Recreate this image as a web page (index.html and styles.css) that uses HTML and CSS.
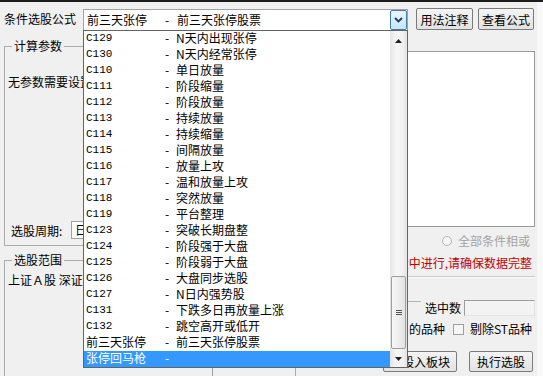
FILE: index.html
```html
<!DOCTYPE html>
<html lang="zh-CN">
<head>
<meta charset="utf-8">
<title>条件选股</title>
<link rel="stylesheet" href="styles.css">
</head>
<body>
<div class="topbar"></div>
<div class="window">
  <header class="header">
    <span class="hlabel">条件选股公式</span>
    <div class="combo">
      <span class="c-code">前三天张停</span><span class="c-dash">-</span><span class="c-name">前三天张停股票</span>
      <span class="combo-btn"><svg width="9" height="6" viewBox="0 0 9 6"><polyline points="1,1 4.5,4.5 8,1" fill="none" stroke="#1d3a63" stroke-width="1.8"/></svg></span>
    </div>
    <button class="btn btn-note">用法注释</button>
    <button class="btn btn-view">查看公式</button>
  </header>

  <div class="main">
    <div class="left">
      <fieldset class="group group-params">
        <legend>计算参数</legend>
        <p class="noparam clip">无参数需要设置</p>
        <div class="period-row clip"><span class="period-label">选股周期:</span><span class="period-select">日线</span></div>
      </fieldset>
      <fieldset class="group group-range">
        <legend>选股范围</legend>
        <p class="range clip">上证Ａ股 深证Ａ股</p>
        <div class="tail"></div>
      </fieldset>
    </div>

    <div class="right">
      <div class="cond-box"></div>
      <div class="radio-row"><span class="radio"></span><span class="radio-text">全部条件相或</span></div>
      <div class="warn">选股在盘中进行,请确保数据完整</div>
      <div class="sep"></div>
      <div class="count-row"><span class="count-line"></span><span class="count-label">选中数</span><span class="count-input"></span></div>
      <div class="check-row"><span>剔除当前未交易的品种</span><span class="check"></span><span>剔除ST品种</span></div>
      <div class="btn-row"><button class="btn btn-block">选股入板块</button><button class="btn btn-run">执行选股</button></div>
    </div>
  </div>

  <div class="droplist">
    <ul class="items">
      <li class="row"><span class="code lat">C129</span><span class="dash">-</span><span class="name">N天内出现张停</span></li>
      <li class="row"><span class="code lat">C130</span><span class="dash">-</span><span class="name">N天内经常张停</span></li>
      <li class="row"><span class="code lat">C110</span><span class="dash">-</span><span class="name">单日放量</span></li>
      <li class="row"><span class="code lat">C111</span><span class="dash">-</span><span class="name">阶段缩量</span></li>
      <li class="row"><span class="code lat">C112</span><span class="dash">-</span><span class="name">阶段放量</span></li>
      <li class="row"><span class="code lat">C113</span><span class="dash">-</span><span class="name">持续放量</span></li>
      <li class="row"><span class="code lat">C114</span><span class="dash">-</span><span class="name">持续缩量</span></li>
      <li class="row"><span class="code lat">C115</span><span class="dash">-</span><span class="name">间隔放量</span></li>
      <li class="row"><span class="code lat">C116</span><span class="dash">-</span><span class="name">放量上攻</span></li>
      <li class="row"><span class="code lat">C117</span><span class="dash">-</span><span class="name">温和放量上攻</span></li>
      <li class="row"><span class="code lat">C118</span><span class="dash">-</span><span class="name">突然放量</span></li>
      <li class="row"><span class="code lat">C119</span><span class="dash">-</span><span class="name">平台整理</span></li>
      <li class="row"><span class="code lat">C123</span><span class="dash">-</span><span class="name">突破长期盘整</span></li>
      <li class="row"><span class="code lat">C124</span><span class="dash">-</span><span class="name">阶段强于大盘</span></li>
      <li class="row"><span class="code lat">C125</span><span class="dash">-</span><span class="name">阶段弱于大盘</span></li>
      <li class="row"><span class="code lat">C126</span><span class="dash">-</span><span class="name">大盘同步选股</span></li>
      <li class="row"><span class="code lat">C127</span><span class="dash">-</span><span class="name">N日内强势股</span></li>
      <li class="row"><span class="code lat">C131</span><span class="dash">-</span><span class="name">下跌多日再放量上涨</span></li>
      <li class="row"><span class="code lat">C132</span><span class="dash">-</span><span class="name">跳空高开或低开</span></li>
      <li class="row"><span class="code">前三天张停</span><span class="dash">-</span><span class="name">前三天张停股票</span></li>
      <li class="row selected"><span class="code">张停回马枪</span><span class="dash">-</span><span class="name"></span></li>
    </ul>
    <div class="scrollbar">
      <div class="sb-btn sb-up"><svg width="7" height="4" viewBox="0 0 7 4"><polygon points="0,4 3.5,0 7,4" fill="#222"/></svg></div>
      <div class="sb-track">
        <div class="sb-thumb"><svg width="6" height="5" viewBox="0 0 6 5"><path d="M0 0.5H6M0 2.5H6M0 4.5H6" stroke="#555" stroke-width="1"/></svg></div>
      </div>
      <div class="sb-btn"><svg width="7" height="4" viewBox="0 0 7 4"><polygon points="0,0 3.5,4 7,0" fill="#222"/></svg></div>
    </div>
  </div>
</div>
</body>
</html>
```

FILE: styles.css
```css
* { box-sizing: border-box; }
html, body { margin: 0; padding: 0; }
body {
  width: 543px;
  height: 376px;
  overflow: hidden;
  position: relative;
  background: #f8f8f8;
  font-family: "Noto Sans CJK SC", "Liberation Sans", sans-serif;
  font-size: 12px;
  color: #000;
}
.topbar { height: 2px; background: #1c1c1c; }
.window {
  width: 537px;
  height: 374px;
  padding-top: 6px;
  background: #f0f0f0;
}

/* header */
.header { display: flex; align-items: flex-start; height: 23px; }
.hlabel { width: 83px; padding-left: 4px; line-height: 21px; white-space: nowrap; }
.combo {
  width: 325px;
  height: 22px;
  margin-top: 1px;
  border: 1px solid #a3a3a3;
  background: #fff;
  display: flex;
  align-items: center;
  padding-left: 3px;
  line-height: 14px;
}
.c-code { width: 78px; }
.c-dash { width: 12px; }
.c-name { white-space: nowrap; }
.combo-btn {
  margin-left: auto;
  width: 17px;
  height: 20px;
  border: 1px solid #3c7fb1;
  border-radius: 2px;
  background: linear-gradient(#eaf6fd, #c7e4fa);
  display: flex;
  align-items: center;
  justify-content: center;
}
.btn {
  height: 22px;
  padding: 0;
  font: inherit;
  color: #000;
  border: 1px solid #7a7a7a;
  border-radius: 2px;
  background: linear-gradient(#f4f4f4, #e2e2e2);
  white-space: nowrap;
}
.btn-note { width: 57px; margin-left: 8px; }
.btn-view { width: 56px; margin-left: 5px; }

/* main area */
.main {
  display: grid;
  grid-template-columns: 292px 233px;
  column-gap: 6px;
  padding-left: 4px;
}
.left { display: flex; flex-direction: column; }
.group {
  margin: 0;
  padding: 0 0 0 3px;
  border: 1px solid #ababab;
  min-width: 0;
}
.group legend { padding: 0 2px; margin-left: 4px; line-height: 14px; }
.group-params { margin-top: 8px; height: 207px; }
/* contents that run under the open drop-down list are cut at its left edge */
.clip { width: 75px; overflow: hidden; }
.noparam { margin: 22px 0 0; line-height: 14px; white-space: nowrap; }
.period-row { display: flex; align-items: center; margin-top: 132px; height: 18px; }
.period-label { width: 60px; margin-left: 3px; flex: none; }
.period-select {
  width: 60px;
  height: 18px;
  flex: none;
  border: 1px solid #a0a0a0;
  background: #fff;
  padding-left: 3px;
  line-height: 16px;
}
.group-range { margin-top: 7px; height: 140px; }
.range { margin: 6px 0 0; line-height: 14px; white-space: nowrap; }
.tail {
  margin-top: 80px;
  margin-left: 204px;
  height: 12px;
  border-left: 1px solid #a0a0a0;
}

/* right panel */
.right { display: flex; flex-direction: column; }
.cond-box { margin-top: 20px; height: 176px; border: 1px solid #9a9a9a; background: #fff; }
.radio-row {
  margin-top: 7px;
  height: 14px;
  display: flex;
  justify-content: flex-end;
  align-items: center;
  gap: 6px;
  padding-right: 5px;
}
.radio { width: 10px; height: 10px; border-radius: 50%; border: 1px solid #b5b5b5; background: #f5f5f5; }
.radio-text { color: #a3a3a3; line-height: 14px; }
.warn {
  margin-top: 8px;
  margin-left: 106px;
  height: 14px;
  line-height: 14px;
  text-align: right;
  padding-right: 3px;
  color: #c00000;
  white-space: nowrap;
  direction: rtl;
  overflow: hidden;
}
.sep { margin-top: 6px; height: 2px; border-top: 1px solid #c9c9c9; border-bottom: 1px solid #fbfbfb; }
.count-row { margin-top: 22px; height: 16px; display: flex; align-items: flex-start; }
.count-line { flex: 1; margin-top: 1px; border-top: 1px solid #b5b5b5; }
.count-label { margin: 0 3px 0 4px; line-height: 16px; }
.count-input {
  width: 71px;
  height: 16px;
  border-top: 1px solid #9c9c9c;
  border-left: 1px solid #9c9c9c;
  border-right: 1px solid #e3e3e3;
  border-bottom: 1px solid #e3e3e3;
  background: #f3f3f3;
}
.check-row {
  margin-top: 6px;
  margin-left: 106px;
  height: 14px;
  display: flex;
  justify-content: flex-end;
  align-items: center;
  padding-right: 3px;
  line-height: 14px;
  white-space: nowrap;
  overflow: hidden;
}
.check-row span { flex: none; }
.check { width: 11px; height: 11px; margin: 0 6px 0 8px; border: 1px solid #a0a0a0; background: #f6f6f6; }
.btn-row { margin-top: 15px; display: flex; justify-content: flex-end; gap: 12px; padding-right: 2px; }
.btn-row .btn { height: 21px; }
.btn-block { width: 74px; }
.btn-run { width: 64px; }

/* dropdown list overlay */
.droplist {
  position: absolute;
  left: 83px;
  top: 30px;
  width: 325px;
  height: 338px;
  border: 1px solid #646464;
  background: #fff;
  display: flex;
}
.items { list-style: none; margin: 0; padding: 0; width: 306px; }
.row {
  display: flex;
  height: 16px;
  line-height: 14px;
  padding-left: 2px;
  white-space: nowrap;
}
.code { width: 79px; }
.code.lat { font-family: "Liberation Mono", monospace; font-size: 11px; }
.dash { width: 11px; }
.selected { background: #3399ff; color: #fff; }
.scrollbar {
  width: 17px;
  display: flex;
  flex-direction: column;
  background: linear-gradient(to right, #e6e6e6, #f6f6f6 40%, #f2f2f2 70%, #e4e4e4);
}
.sb-btn { height: 17px; display: flex; align-items: center; justify-content: center; }
.sb-up { padding-top: 3px; }
.sb-track { flex: 1; padding: 0 1px; }
.sb-thumb {
  margin-top: 228px;
  height: 73px;
  border: 1px solid #9d9d9d;
  border-radius: 2px;
  background: linear-gradient(to right, #f7f7f7, #e3e3e3);
  display: flex;
  align-items: center;
  justify-content: center;
}
```
